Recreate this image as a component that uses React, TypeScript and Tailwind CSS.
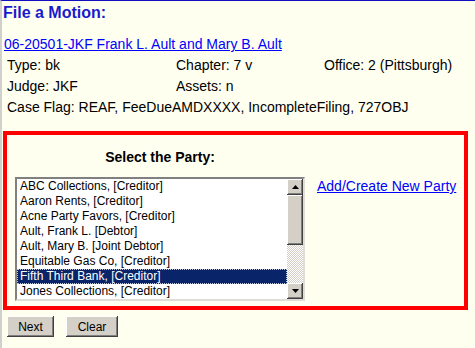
import React from 'react';

const parties = [
  'ABC Collections, [Creditor]',
  'Aaron Rents, [Creditor]',
  'Acne Party Favors, [Creditor]',
  'Ault, Frank L. [Debtor]',
  'Ault, Mary B. [Joint Debtor]',
  'Equitable Gas Co, [Creditor]',
  'Fifth Third Bank, [Creditor]',
  'Jones Collections, [Creditor]',
];

const bevel =
  'shadow-[inset_-1px_-1px_0_#404040,inset_1px_1px_0_#ffffff,inset_-2px_-2px_0_#808080,inset_2px_2px_0_#d4d0c8]';

function Arrow({ up }: { up?: boolean }) {
  return (
    <svg width="7" height="4" viewBox="0 0 7 4">
      {up ? <polygon points="0,4 7,4 3.5,0" fill="#000" /> : <polygon points="0,0 7,0 3.5,4" fill="#000" />}
    </svg>
  );
}

function ListBox() {
  const selected = 6;
  return (
    <div className="flex w-[290px] h-[124px] border-2 border-t-[#808080] border-l-[#808080] border-b-[#e0ddd6] border-r-[#e0ddd6] bg-white">
      <div className="flex-1 flex flex-col">
        {parties.map((p, i) => (
          <div
            key={p}
            className={`h-[15px] leading-[13px] pl-[2px] text-[12px] whitespace-nowrap ${
              i === selected
                ? 'bg-[#0a246a] text-white border border-dotted border-[#c0c8e0]'
                : 'text-black border border-transparent'
            }`}
          >
            {p}
          </div>
        ))}
      </div>
      <div className="w-[16px] flex flex-col bg-[repeating-conic-gradient(#d4d0c8_0_25%,#ffffff_0_50%)] bg-[length:2px_2px]">
        <div className={`h-[16px] flex items-center justify-center bg-[#d4d0c8] ${bevel}`}>
          <Arrow up />
        </div>
        <div className={`h-[50px] bg-[#d4d0c8] ${bevel}`} />
        <div className="flex-1" />
        <div className={`h-[16px] flex items-center justify-center bg-[#d4d0c8] ${bevel}`}>
          <Arrow />
        </div>
      </div>
    </div>
  );
}

function Button({ label, width }: { label: string; width: string }) {
  return (
    <button className={`${width} h-[21px] bg-[#d4d0c8] text-[12px] text-black ${bevel}`}>{label}</button>
  );
}

export default function App() {
  return (
    <div
      className="w-[475px] h-[348px] overflow-hidden bg-[#fffff0] border-t border-t-[#1010c0] border-l-2 border-l-[#d0d0cc]"
      style={{ fontFamily: '"Liberation Sans", Arial, sans-serif' }}
    >
      <h1 className="pt-[2px] pl-[1px] text-[16px] leading-[20px] font-bold text-[#1a1acc]">File a Motion:</h1>

      <a href="#" className="block mt-[11px] pl-[2px] text-[14px] leading-[21px] text-[#0000ff] underline">
        06-20501-JKF Frank L. Ault and Mary B. Ault
      </a>

      <div className="grid grid-cols-[169px_148px_1fr] pl-[5px] text-[14px] leading-[21px] text-black">
        <div>Type: bk</div>
        <div>Chapter: 7 v</div>
        <div>Office: 2 (Pittsburgh)</div>
        <div>Judge: JKF</div>
        <div>Assets: n</div>
        <div />
        <div className="col-span-3 whitespace-nowrap">Case Flag: REAF, FeeDueAMDXXXX, IncompleteFiling, 727OBJ</div>
      </div>

      <div className="ml-[1px] mt-[13px] w-[465px] border-4 border-[#ff0000] flex gap-[12px] pl-[8px] pt-[12px] pb-[5px]">
        <div className="flex flex-col">
          <div className="text-center text-[14px] font-bold leading-[21px] text-black">Select the Party:</div>
          <div className="mt-[9px]">
            <ListBox />
          </div>
        </div>
        <div className="pt-[27px]">
          <a href="#" className="text-[14px] leading-[21px] text-[#0000ff] underline whitespace-nowrap">
            Add/Create New Party
          </a>
        </div>
      </div>

      <div className="flex gap-[12px] pl-[5px] mt-[6px]">
        <Button label="Next" width="w-[47px]" />
        <Button label="Clear" width="w-[52px]" />
      </div>
    </div>
  );
}
